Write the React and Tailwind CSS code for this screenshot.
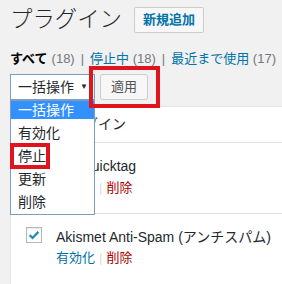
import React from 'react';

const font = "font-['Liberation_Sans','Noto_Sans_CJK_JP',sans-serif]";

const Checkbox = ({ checked }) => (
  <span className="flex h-[16px] w-[16px] items-center justify-center border border-[#b4b9be] bg-white shadow-[inset_0_1px_2px_rgba(0,0,0,0.1)]">
    {checked && (
      <svg viewBox="0 0 16 16" className="h-[14px] w-[14px]">
        <path d="M3 8.2 L6.4 11.4 L13 4.4" fill="none" stroke="#1e8cbe" strokeWidth="2.6" />
      </svg>
    )}
  </span>
);

const RowActions = () => (
  <div className="flex items-center text-[13px] leading-[18px]">
    <span className="text-[#0073aa]">有効化</span>
    <span className="mx-[4px] text-[#ddd]">|</span>
    <span className="text-[#a00]">削除</span>
  </div>
);

export default function App() {
  const bulkOptions = ['有効化', '停止', '更新', '削除'];

  return (
    <div className={`relative h-[284px] w-[282px] overflow-hidden bg-[#f1f1f1] text-[#23282d] ${font}`}>
      <div className="pl-[10px] pt-[7px]">
        {/* Title */}
        <div className="flex h-[38px] items-start">
          <div className="flex h-[26px] items-center">
            <h1 className="text-[22.4px] font-light leading-[26px] text-[#23282d]">プラグイン</h1>
            <button className="ml-[12px] h-[26px] rounded-[2px] border border-[#ccc] bg-[#f7f7f7] px-[8px] text-[13px] font-bold leading-[24px] text-[#0073aa]">
              新規追加
            </button>
          </div>
        </div>

        {/* Filters */}
        <div className="flex h-[28px] items-center whitespace-nowrap text-[13px]">
          <span className="font-bold text-black">すべて</span>
          <span className="ml-[4px] text-[#72777c]">(18)</span>
          <span className="mx-[6px] text-[#72777c]">|</span>
          <span className="text-[#0073aa]">停止中 <span className="text-[#72777c]">(18)</span></span>
          <span className="mx-[6px] text-[#72777c]">|</span>
          <span className="text-[#0073aa]">最近まで使用 <span className="text-[#72777c]">(17)</span></span>
        </div>

        {/* Bulk actions */}
        <div className="mt-[1px] flex h-[26px] items-center">
          <div className="flex h-[26px] w-[85px] items-center justify-between border border-[#7e9bc0] bg-white pl-[7px] pr-[6px] text-[14px]">
            <span>一括操作</span>
            <span className="text-[8px]">▼</span>
          </div>
          <button className="ml-[5px] h-[26px] w-[48px] rounded-[3px] border border-[#ccc] bg-[#f7f7f7] text-[13px] text-[#555]">
            適用
          </button>
        </div>
      </div>

      {/* Plugin table */}
      <div className="ml-[10px] mt-[6px] border-l border-t border-[#e5e5e5] bg-white">
        <div className="flex h-[36px] items-center border-b border-[#e1e1e1] pl-[45px] text-[14px]">
          プラグイン
        </div>
        <div className="flex h-[71px] border-b border-[#e1e1e1]">
          <div className="w-[45px] pl-[15px] pt-[15px]">
            <Checkbox />
          </div>
          <div className="pt-[12px]">
            <div className="text-[14px] leading-[22px]">AddQuicktag</div>
            <div className="mt-[2px]">
              <RowActions />
            </div>
          </div>
        </div>
        <div className="flex h-[80px]">
          <div className="w-[45px] pl-[15px] pt-[13px]">
            <Checkbox checked />
          </div>
          <div className="pt-[12px]">
            <div className="whitespace-nowrap text-[14px] leading-[22px]">Akismet Anti-Spam (アンチスパム)</div>
            <div className="mt-[1px]">
              <RowActions />
            </div>
          </div>
        </div>
      </div>

      {/* Open dropdown list */}
      <div className="absolute left-[10px] top-[100px] w-[85px] border border-[#7e9bc0] bg-white text-[14px]">
        <div className="h-[21px]">
          <div className="flex h-[18px] items-center bg-[#3390ff] pl-[7px] text-white">一括操作</div>
        </div>
        {bulkOptions.map((opt) => (
          <div key={opt} className="flex h-[23px] items-center pl-[7px]">
            {opt}
          </div>
        ))}
      </div>

      {/* Annotation boxes */}
      <div className="absolute left-[89px] top-[66px] h-[42px] w-[71px] border-[4px] border-[#e0141e]" />
      <div className="absolute left-[10px] top-[143px] h-[26px] w-[40px] border-[4px] border-[#e0141e]" />
    </div>
  );
}
